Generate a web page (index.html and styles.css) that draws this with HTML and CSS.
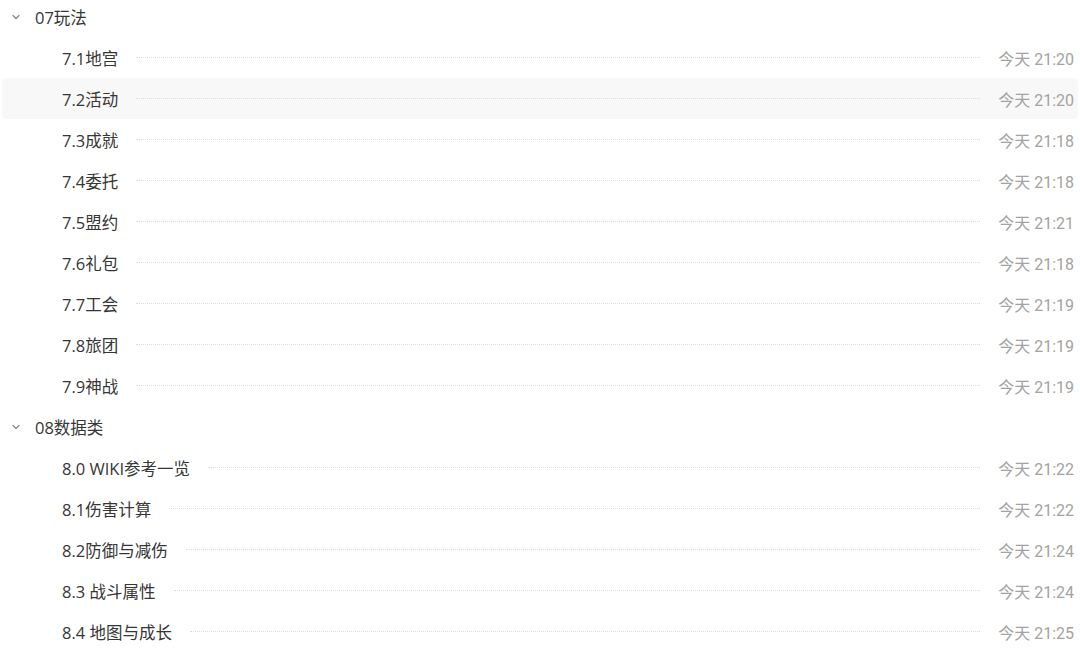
FILE: index.html
```html
<!DOCTYPE html>
<html lang="zh-CN">
<head>
<meta charset="utf-8">
<title>目录</title>
<link rel="stylesheet" href="styles.css">
</head>
<body>
<div class="tree">
  <div class="group">
    <div class="head">
      <svg class="chev" width="8" height="6" viewBox="0 0 8 6"><path d="M1 1.5 L4 4.5 L7 1.5" fill="none" stroke="#8a8a8a" stroke-width="1.3" stroke-linecap="round" stroke-linejoin="round"/></svg>
      <span class="head-title">07玩法</span>
    </div>
    <div class="row"><span class="name">7.1地宫</span><span class="dots"></span><span class="date">今天 21:20</span></div>
    <div class="row row-hover"><span class="name">7.2活动</span><span class="dots"></span><span class="date">今天 21:20</span></div>
    <div class="row"><span class="name">7.3成就</span><span class="dots"></span><span class="date">今天 21:18</span></div>
    <div class="row"><span class="name">7.4委托</span><span class="dots"></span><span class="date">今天 21:18</span></div>
    <div class="row"><span class="name">7.5盟约</span><span class="dots"></span><span class="date">今天 21:21</span></div>
    <div class="row"><span class="name">7.6礼包</span><span class="dots"></span><span class="date">今天 21:18</span></div>
    <div class="row"><span class="name">7.7工会</span><span class="dots"></span><span class="date">今天 21:19</span></div>
    <div class="row"><span class="name">7.8旅团</span><span class="dots"></span><span class="date">今天 21:19</span></div>
    <div class="row"><span class="name">7.9神战</span><span class="dots"></span><span class="date">今天 21:19</span></div>
  </div>
  <div class="group">
    <div class="head">
      <svg class="chev" width="8" height="6" viewBox="0 0 8 6"><path d="M1 1.5 L4 4.5 L7 1.5" fill="none" stroke="#8a8a8a" stroke-width="1.3" stroke-linecap="round" stroke-linejoin="round"/></svg>
      <span class="head-title">08数据类</span>
    </div>
    <div class="row"><span class="name">8.0 WIKI参考一览</span><span class="dots"></span><span class="date">今天 21:22</span></div>
    <div class="row"><span class="name">8.1伤害计算</span><span class="dots"></span><span class="date">今天 21:22</span></div>
    <div class="row"><span class="name">8.2防御与减伤</span><span class="dots"></span><span class="date">今天 21:24</span></div>
    <div class="row"><span class="name">8.3 战斗属性</span><span class="dots"></span><span class="date">今天 21:24</span></div>
    <div class="row"><span class="name">8.4 地图与成长</span><span class="dots"></span><span class="date">今天 21:25</span></div>
  </div>
</div>
</body>
</html>
```

FILE: styles.css
```css
html, body {
  margin: 0;
  padding: 0;
  background: #ffffff;
  overflow: hidden;
}

body {
  font-family: "Open Sans", "Noto Sans CJK SC", sans-serif;
  font-size: 16.5px;
  color: #363636;
}

.tree {
  margin-top: -4px;
  display: flex;
  flex-direction: column;
}

.group {
  display: flex;
  flex-direction: column;
}

.head {
  height: 41px;
  display: flex;
  align-items: center;
  padding-left: 12px;
}

.chev {
  display: block;
  margin-right: 15px;
}

.head-title {
  white-space: nowrap;
}

.row {
  height: 41px;
  display: flex;
  align-items: center;
  padding: 0 6px 0 62px;
  margin: 0 2px 0 2px;
  border-radius: 4px;
}

.row .name {
  margin-left: -2px;
  white-space: nowrap;
}

.row-hover {
  background: #f8f8f8;
}

.dots {
  flex: 1;
  height: 0;
  border-top: 1px dotted #dcdcdc;
  margin: 0 18px;
}

.date {
  font-family: Roboto, "Noto Sans CJK SC", sans-serif;
  font-size: 16px;
  color: #a3a3a3;
  white-space: nowrap;
  margin-right: -2px;
}
```
